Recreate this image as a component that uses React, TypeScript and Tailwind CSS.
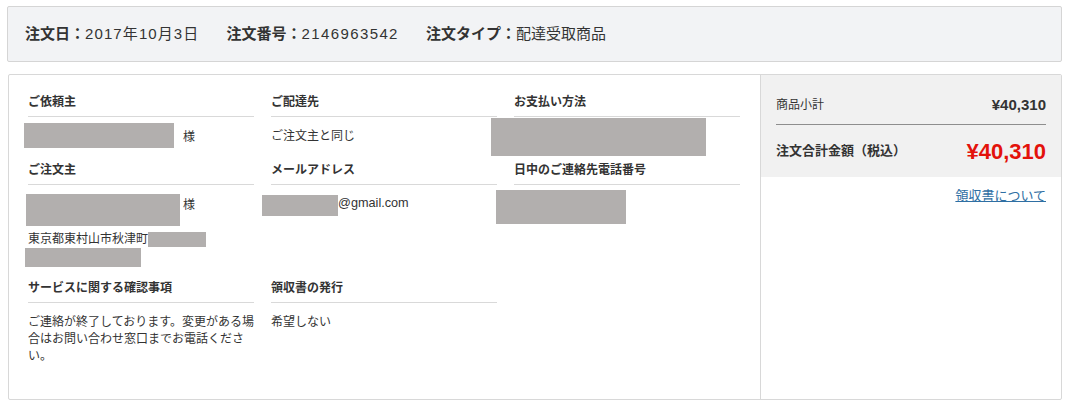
import React from 'react';

const font = { fontFamily: '"Liberation Sans", "Noto Sans CJK JP", sans-serif' };

const Redact = ({ className }: { className: string }) => <div className={`bg-[#b2afae] ${className}`} />;

const Head = ({ children }: { children: React.ReactNode }) => (
  <div className="pt-[3px] pb-[5px] border-b border-[#d9d9d9] text-[12px] leading-[18px] font-bold text-[#333]">{children}</div>
);

export default function App() {
  return (
    <div className="w-[1080px] h-[409px] bg-white text-[#333] overflow-hidden" style={font}>
      {/* order summary bar */}
      <div className="ml-[7px] mr-[18px] mt-[6px] h-[56px] bg-[#f2f3f5] border border-[#d5d5d5] rounded-[2px] flex items-center pl-[17px] gap-[27px] text-[15px]">
        <div><span className="font-bold">注文日：</span><span className="tracking-[1.1px]">2017年10月3日</span></div>
        <div><span className="font-bold">注文番号：</span><span className="tracking-[1.4px]">2146963542</span></div>
        <div><span className="font-bold">注文タイプ：</span>配達受取商品</div>
      </div>

      <div className="ml-[8px] mr-[18px] mt-[12px] h-[326px] border border-[#d8d8d8] rounded-[2px] flex">
        {/* details */}
        <div className="flex-1 pl-[19px] pt-[15px]">
          <div className="grid grid-cols-[226px_226px_226px] gap-x-[17px] grid-rows-[27px_41px_27px_91px_27px_auto]">
            <Head>ご依頼主</Head>
            <Head>ご配達先</Head>
            <Head>お支払い方法</Head>

            <div className="flex items-start pt-[6px]">
              <Redact className="-ml-[4px] w-[150px] h-[25px]" />
              <span className="ml-[9px] mt-[5px] text-[12px] leading-[18px]">様</span>
            </div>
            <div className="pt-[10px] text-[12px] leading-[18px]">ご注文主と同じ</div>
            <div className="pt-[1px]">
              <Redact className="-ml-[23px] w-[215px] h-[38px]" />
            </div>

            <Head>ご注文主</Head>
            <Head>メールアドレス</Head>
            <Head>日中のご連絡先電話番号</Head>

            <div className="pt-[9px] text-[12px] leading-[18px]">
              <div className="flex items-start">
                <Redact className="-ml-[2px] w-[154px] h-[32px]" />
                <span className="ml-[3px] mt-[2px]">様</span>
              </div>
              <div className="flex items-center mt-[4px]">
                <span>東京都東村山市秋津町</span>
                <Redact className="w-[58px] h-[15px]" />
              </div>
              <Redact className="-ml-[3px] w-[116px] h-[19px]" />
            </div>
            <div className="pt-[10px] flex items-start text-[12.7px] leading-[18px]">
              <Redact className="-ml-[9px] w-[76px] h-[21px]" />
              <span className="-mt-[1px]">@gmail.com</span>
            </div>
            <div className="pt-[5px]">
              <Redact className="-ml-[18px] w-[130px] h-[34px]" />
            </div>

            <Head>サービスに関する確認事項</Head>
            <Head>領収書の発行</Head>
            <div />

            <div className="pt-[11px] text-[12px] leading-[17px] w-[232px]">
              ご連絡が終了しております。変更がある場合はお問い合わせ窓口までお電話ください。
            </div>
            <div className="pt-[11px] text-[12px] leading-[17px]">希望しない</div>
            <div />
          </div>
        </div>

        {/* price summary */}
        <div className="w-[301px] border-l border-[#d8d8d8] flex flex-col">
          <div className="bg-[#f1f1f1] px-[15px]">
            <div className="flex justify-between items-center pt-[21px] pb-[10px] border-b border-[#8e8e8e]">
              <span className="text-[12px] leading-[18px]">商品小計</span>
              <span className="text-[15px] leading-[18px] font-bold">¥40,310</span>
            </div>
            <div className="h-[52px] flex justify-between items-center">
              <span className="text-[13px] font-bold">注文合計金額（税込）</span>
              <span className="text-[22px] font-bold text-[#e3120b]">¥40,310</span>
            </div>
          </div>
          <div className="px-[15px] pt-[9px] flex justify-end">
            <a className="text-[13px] leading-[20px] text-[#2f6fa3] underline">領収書について</a>
          </div>
        </div>
      </div>
    </div>
  );
}
